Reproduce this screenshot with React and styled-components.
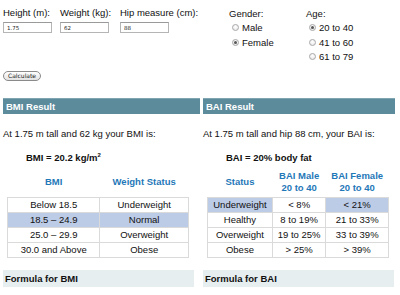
import React from 'react';
import styled, { createGlobalStyle } from 'styled-components';

const GlobalStyle = createGlobalStyle`
  html, body {
    margin: 0;
    padding: 0;
    background: #fff;
  }
  body {
    font-family: "Liberation Sans", Arial, Helvetica, sans-serif;
    color: #111;
  }
`;

const Page = styled.div`
  width: 400px;
  padding: 7px 0 0 3px;
  box-sizing: border-box;
`;

const FormGrid = styled.div`
  display: grid;
  grid-template-columns: 57px 60px 109px 77px auto;
  align-items: start;
`;

const Field = styled.div`
  display: flex;
  flex-direction: column;
`;

const Label = styled.label`
  font-size: 9.5px;
  line-height: 11px;
  color: #111;
`;

const TextInput = styled.input`
  margin-top: 4px;
  width: 49px;
  height: 11px;
  box-sizing: border-box;
  border: 1px solid #b5b5b5;
  border-top-color: #9a9a9a;
  padding: 0 0 0 3px;
  font-family: "DejaVu Sans", sans-serif;
  font-size: 5.5px;
  color: #222;
  outline: none;
`;

const RadioGroup = styled.div`
  display: flex;
  flex-direction: column;
  padding-top: 1px;
`;

const RadioList = styled.div`
  display: flex;
  flex-direction: column;
  gap: 3.5px;
  margin-top: 3px;
  padding-left: ${p => p.indent}px;
`;

const RadioRow = styled.div`
  display: flex;
  align-items: center;
  gap: 3px;
  font-size: 9.5px;
  line-height: 11px;
`;

const RadioDot = styled.span`
  width: 7px;
  height: 7px;
  border-radius: 50%;
  box-sizing: border-box;
  border: 1px solid #a8a8a8;
  background: radial-gradient(circle at 50% 35%, #fff 0%, #e4e4e4 100%);
  display: flex;
  align-items: center;
  justify-content: center;

  &::after {
    content: '';
    width: 3px;
    height: 3px;
    border-radius: 50%;
    background: ${p => (p.checked ? '#555' : 'transparent')};
  }
`;

const CalcButton = styled.button`
  margin-top: 9px;
  display: block;
  height: 10px;
  padding: 0 4px;
  border: 1px solid #8a8a8a;
  border-radius: 6px;
  background: linear-gradient(#ffffff, #e2e2e2);
  font-family: "DejaVu Sans", sans-serif;
  font-size: 6px;
  line-height: 8px;
  color: #222;
`;

const Results = styled.div`
  margin-top: 17px;
  display: grid;
  grid-template-columns: 197px 192px;
  column-gap: 3px;
`;

const Column = styled.div`
  display: flex;
  flex-direction: column;
`;

const HeaderBar = styled.div`
  height: 16px;
  background: #5c8b9c;
  border-top: 1px solid #7fa5b3;
  box-sizing: border-box;
  color: #fff;
  font-weight: bold;
  font-size: 9.5px;
  line-height: 15px;
  padding-left: 3px;
`;

const Sentence = styled.p`
  margin: 14px 0 0 0;
  font-size: 9.5px;
  line-height: 11px;
`;

const Equation = styled.p`
  margin: 13px 0 0 23px;
  font-size: 9.5px;
  font-weight: bold;
  line-height: 12px;

  sup {
    font-size: 6px;
    line-height: 0;
  }
`;

const Table = styled.table`
  margin: 5px 0 0 4px;
  width: 182px;
  border-collapse: collapse;
  font-size: 9.5px;
`;

const Th = styled.th`
  height: 26px;
  color: #1f78b8;
  font-weight: bold;
  line-height: 12px;
  padding: 0 0 2px 0;
  text-align: center;
  vertical-align: middle;
`;

const Td = styled.td`
  border: 1px solid #dadada;
  height: 14px;
  padding: 0;
  text-align: center;
  line-height: 12px;
  background: ${p => (p.hl ? '#bccbe6' : '#fff')};
`;

const FormulaBar = styled.div`
  margin-top: 12px;
  width: 191px;
  height: 17px;
  background: #e7eef0;
  font-weight: bold;
  font-size: 9.5px;
  line-height: 17px;
  padding-left: 2px;
  box-sizing: border-box;
`;

const bmiRows = [
  ['Below 18.5', 'Underweight'],
  ['18.5 – 24.9', 'Normal'],
  ['25.0 – 29.9', 'Overweight'],
  ['30.0 and Above', 'Obese'],
];

const baiRows = [
  ['Underweight', '< 8%', '< 21%'],
  ['Healthy', '8 to 19%', '21 to 33%'],
  ['Overweight', '19 to 25%', '33 to 39%'],
  ['Obese', '> 25%', '> 39%'],
];

const Radio = ({ label, checked }) => (
  <RadioRow>
    <RadioDot checked={checked} />
    {label}
  </RadioRow>
);

export default function App() {
  return (
    <Page>
      <GlobalStyle />
      <FormGrid>
        <Field>
          <Label>Height (m):</Label>
          <TextInput defaultValue="1.75" />
        </Field>
        <Field>
          <Label>Weight (kg):</Label>
          <TextInput defaultValue="62" />
        </Field>
        <Field>
          <Label>Hip measure (cm):</Label>
          <TextInput defaultValue="88" />
        </Field>
        <RadioGroup>
          <Label>Gender:</Label>
          <RadioList indent={3}>
            <Radio label="Male" />
            <Radio label="Female" checked />
          </RadioList>
        </RadioGroup>
        <RadioGroup>
          <Label>Age:</Label>
          <RadioList indent={3}>
            <Radio label="20 to 40" checked />
            <Radio label="41 to 60" />
            <Radio label="61 to 79" />
          </RadioList>
        </RadioGroup>
      </FormGrid>

      <CalcButton>Calculate</CalcButton>

      <Results>
        <Column>
          <HeaderBar>BMI Result</HeaderBar>
          <Sentence>At 1.75 m tall and 62 kg your BMI is:</Sentence>
          <Equation>
            BMI = 20.2 kg/m<sup>2</sup>
          </Equation>
          <Table>
            <colgroup>
              <col style={{ width: '93px' }} />
              <col style={{ width: '89px' }} />
            </colgroup>
            <thead>
              <tr>
                <Th>BMI</Th>
                <Th>Weight Status</Th>
              </tr>
            </thead>
            <tbody>
              {bmiRows.map((r, i) => (
                <tr key={r[0]}>
                  <Td hl={i === 1}>{r[0]}</Td>
                  <Td hl={i === 1}>{r[1]}</Td>
                </tr>
              ))}
            </tbody>
          </Table>
          <FormulaBar>Formula for BMI</FormulaBar>
        </Column>

        <Column>
          <HeaderBar>BAI Result</HeaderBar>
          <Sentence>At 1.75 m tall and hip 88 cm, your BAI is:</Sentence>
          <Equation>BAI = 20% body fat</Equation>
          <Table>
            <colgroup>
              <col style={{ width: '65px' }} />
              <col style={{ width: '54px' }} />
              <col style={{ width: '63px' }} />
            </colgroup>
            <thead>
              <tr>
                <Th>Status</Th>
                <Th>
                  BAI Male
                  <br />
                  20 to 40
                </Th>
                <Th>
                  BAI Female
                  <br />
                  20 to 40
                </Th>
              </tr>
            </thead>
            <tbody>
              {baiRows.map((r, i) => (
                <tr key={r[0]}>
                  <Td hl={i === 0}>{r[0]}</Td>
                  <Td>{r[1]}</Td>
                  <Td hl={i === 0}>{r[2]}</Td>
                </tr>
              ))}
            </tbody>
          </Table>
          <FormulaBar>Formula for BAI</FormulaBar>
        </Column>
      </Results>
    </Page>
  );
}
